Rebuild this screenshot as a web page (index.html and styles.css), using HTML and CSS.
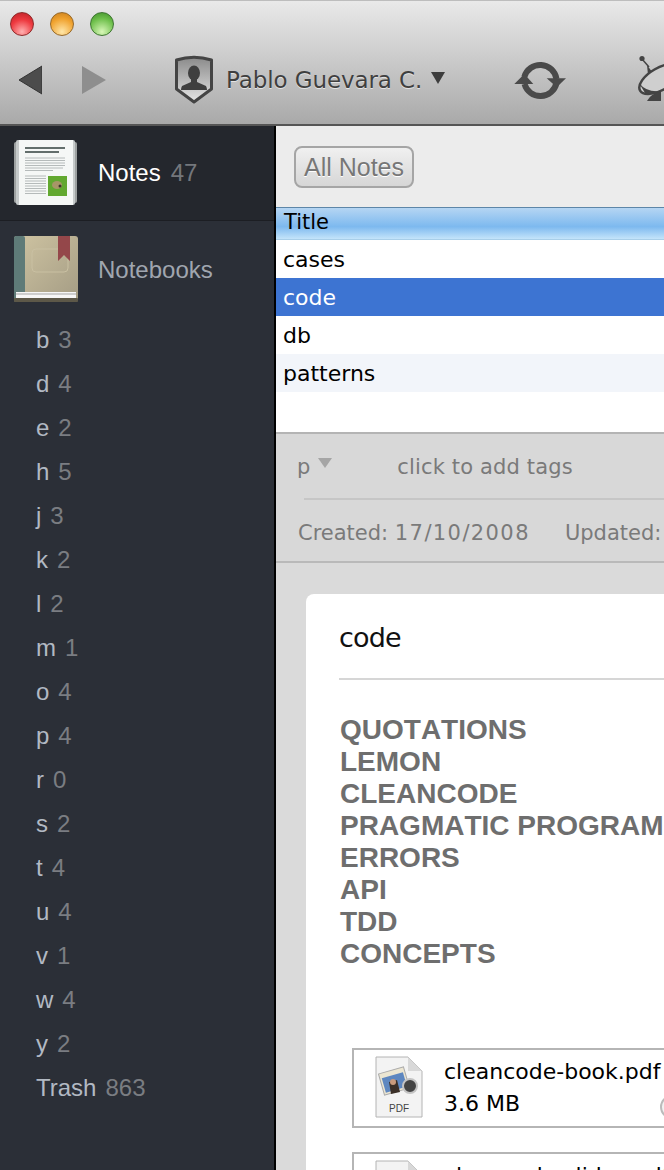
FILE: index.html
```html
<!DOCTYPE html>
<html>
    <head>
        <meta charset="utf-8">
        <title>Notes</title>
        <link rel="stylesheet" href="styles.css">
    </head>
    <body>
        <div class="toolbar">
            <div class="lights">
                <span class="light red"></span>
                <span class="light amber"></span>
                <span class="light green"></span>
            </div>
            <div class="tools">
                <svg class="nav" width="24" height="30" viewBox="0 0 24 30"><path d="M24 1V29L1 15Z" fill="#4c4c4c" stroke="#333" stroke-width="1"/></svg>
                <svg class="nav nav-next" width="24" height="30" viewBox="0 0 24 30"><path d="M0 1V29L24 15Z" fill="#8e8e8e"/></svg>
                <svg class="shield" width="40" height="50" viewBox="0 0 40 50">
                    <defs>
                        <linearGradient id="shieldfill" x1="0" y1="0" x2="0" y2="1">
                            <stop offset="0" stop-color="#8a8a8a"/>
                            <stop offset="1" stop-color="#e6e6e6"/>
                        </linearGradient>
                    </defs>
                    <path d="M2.5 5Q20 -0.5 37.5 5V34L20 47L2.5 34Z" fill="url(#shieldfill)" stroke="#444" stroke-width="3" stroke-linejoin="round"/>
                    <ellipse cx="20" cy="18" rx="6" ry="7.5" fill="#3f3f3f"/>
                    <path d="M17 24H23V27L32 31Q33 33 33 35H7Q7 33 8 31L17 27Z" fill="#3f3f3f"/>
                </svg>
                <span class="user">Pablo Guevara C.</span>
                <span class="caret"></span>
                <svg class="sync" width="54" height="42" viewBox="0 0 54 42">
                    <path d="M11.3 18A16.5 16.5 0 0 1 43.5 20" fill="none" stroke="#4a4a4a" stroke-width="6"/>
                    <path d="M43.5 24A16.5 16.5 0 0 1 11.5 25" fill="none" stroke="#4a4a4a" stroke-width="6"/>
                    <path d="M33.7 19.3H53L43.7 28.3Z" fill="#4a4a4a"/>
                    <path d="M1.3 25H20.3L11.3 15Z" fill="#4a4a4a"/>
                </svg>
                <svg class="dish" width="40" height="50" viewBox="0 0 40 50">
                    <circle cx="5" cy="3.5" r="2.6" fill="#444"/>
                    <path d="M5 4L12 12" stroke="#444" stroke-width="1.5"/>
                    <path d="M10 10L18 21L11 20Z" fill="#444"/>
                    <ellipse cx="23" cy="24" rx="23" ry="11" transform="rotate(-30 23 24)" fill="#cfcfcf" stroke="#444" stroke-width="2.5"/>
                    <path d="M2 28Q10 38 24 36L24 40L8 38Z" fill="#444"/>
                    <path d="M10 46Q14 38 24 37V46Z" fill="#444"/>
                </svg>
            </div>
        </div>
        <div class="main">
            <div class="sidebar">
                <div class="side-row side-notes">
                    <svg class="side-icon" width="66" height="70" viewBox="0 0 66 70">
                        <rect x="1" y="4" width="63" height="61" rx="2" fill="#9da1a1"/>
                        <rect x="3" y="2" width="59" height="65" rx="2" fill="#c6caca"/>
                        <rect x="6" y="2" width="54" height="65" fill="#f5f7f6"/>
                        <path d="M12 10H52M12 14H46" stroke="#33413f" stroke-width="1.6"/>
                        <path d="M12 20H52M12 22.5H52M12 25H52M12 27.5H52M12 30H50M12 32.5H40M12 38H33M12 40.5H33M12 43H33M12 45.5H33M12 48H33M12 50.5H33M12 53H33M12 55.5H33" stroke="#b5baba" stroke-width="1"/>
                        <rect x="35" y="38" width="19" height="20" fill="#62a830"/>
                        <ellipse cx="44" cy="47" rx="5" ry="4" fill="#a89668"/>
                        <circle cx="47" cy="48" r="1.5" fill="#3a3528"/>
                    </svg>
                    <span class="side-name side-name-on">Notes</span>
                    <span class="side-count">47</span>
                </div>
                <div class="side-row side-books">
                    <svg class="side-icon" width="66" height="68" viewBox="0 0 66 68">
                        <defs>
                            <linearGradient id="coverfill" x1="0" y1="0" x2="1" y2="1">
                                <stop offset="0" stop-color="#cfc4a2"/>
                                <stop offset="1" stop-color="#a49c84"/>
                            </linearGradient>
                        </defs>
                        <rect x="1" y="0" width="64" height="66" rx="3" fill="url(#coverfill)"/>
                        <rect x="1" y="0" width="11" height="66" rx="2" fill="#5f7b78"/>
                        <rect x="19" y="13" width="36" height="23" rx="4" fill="none" stroke="#c9c0a2"/>
                        <path d="M45 0H57V25L51 19L45 25Z" fill="#94474a"/>
                        <rect x="3" y="56" width="60" height="6" fill="#f6f6f6"/>
                        <path d="M3 58H63" stroke="#a5a5a5"/>
                        <rect x="1" y="62" width="64" height="4" rx="1" fill="#5d5848"/>
                    </svg>
                    <span class="side-name">Notebooks</span>
                </div>
                <ul class="tags">
                    <li><span class="tag">b</span><span class="tag-num">3</span></li>
                    <li><span class="tag">d</span><span class="tag-num">4</span></li>
                    <li><span class="tag">e</span><span class="tag-num">2</span></li>
                    <li><span class="tag">h</span><span class="tag-num">5</span></li>
                    <li><span class="tag">j</span><span class="tag-num">3</span></li>
                    <li><span class="tag">k</span><span class="tag-num">2</span></li>
                    <li><span class="tag">l</span><span class="tag-num">2</span></li>
                    <li><span class="tag">m</span><span class="tag-num">1</span></li>
                    <li><span class="tag">o</span><span class="tag-num">4</span></li>
                    <li><span class="tag">p</span><span class="tag-num">4</span></li>
                    <li><span class="tag">r</span><span class="tag-num">0</span></li>
                    <li><span class="tag">s</span><span class="tag-num">2</span></li>
                    <li><span class="tag">t</span><span class="tag-num">4</span></li>
                    <li><span class="tag">u</span><span class="tag-num">4</span></li>
                    <li><span class="tag">v</span><span class="tag-num">1</span></li>
                    <li><span class="tag">w</span><span class="tag-num">4</span></li>
                    <li><span class="tag">y</span><span class="tag-num">2</span></li>
                    <li><span class="tag">Trash</span><span class="tag-num">863</span></li>
                </ul>
            </div>
            <div class="content">
                <div class="filter">
                    <span class="filter-btn">All Notes</span>
                </div>
                <div class="list-head">Title</div>
                <div class="list">
                    <div class="list-row">cases</div>
                    <div class="list-row list-row-on">code</div>
                    <div class="list-row">db</div>
                    <div class="list-row list-row-alt">patterns</div>
                </div>
                <div class="meta">
                    <div class="meta-tags">
                        <span class="meta-book">p</span>
                        <span class="meta-caret"></span>
                        <span class="meta-add">click to add tags</span>
                    </div>
                    <div class="meta-dates">
                        <span>Created: <span class="date">17/10/2008</span></span>
                        <span>Updated:</span>
                    </div>
                </div>
                <div class="paper">
                    <div class="card">
                        <div class="note-title">code</div>
                        <div class="headings">
                            <div>QUOTATIONS</div>
                            <div>LEMON</div>
                            <div>CLEANCODE</div>
                            <div>PRAGMATIC PROGRAM</div>
                            <div>ERRORS</div>
                            <div>API</div>
                            <div>TDD</div>
                            <div>CONCEPTS</div>
                        </div>
                        <div class="attach">
                            <svg class="file-icon" width="48" height="62" viewBox="0 0 48 62">
                                <path d="M1 1H33L47 15V61H1Z" fill="#f3f3f3" stroke="#b4b4b4"/>
                                <path d="M33 1V15H47Z" fill="#d8d8d8"/>
                                <rect x="6" y="14" width="26" height="22" transform="rotate(-16 19 25)" fill="#ece6d2" stroke="#aaa"/>
                                <rect x="8" y="19" width="22" height="15" transform="rotate(-16 19 25)" fill="#5e87c0"/>
                                <path d="M14 26L22 24L25 36L16 38Z" fill="#3b3028"/>
                                <circle cx="18" cy="26" r="3" fill="#c99a7c"/>
                                <circle cx="35" cy="30" r="7" fill="#444" stroke="#c4c4c4" stroke-width="2"/>
                                <text class="file-label" x="24" y="56" text-anchor="middle">PDF</text>
                            </svg>
                            <div class="file-text">
                                <div class="file-name">cleancode-book.pdf</div>
                                <div class="file-size">3.6 MB</div>
                            </div>
                            <span class="file-btn"></span>
                        </div>
                        <div class="attach">
                            <svg class="file-icon" width="48" height="62" viewBox="0 0 48 62">
                                <path d="M1 1H33L47 15V61H1Z" fill="#f3f3f3" stroke="#b4b4b4"/>
                                <path d="M33 1V15H47Z" fill="#d8d8d8"/>
                            </svg>
                            <div class="file-text">
                                <div class="file-name">cleancode-slides.pdf</div>
                            </div>
                        </div>
                    </div>
                </div>
            </div>
        </div>
    </body>
</html>
```

FILE: styles.css
```css
* {
    margin: 0;
    padding: 0;
    box-sizing: border-box;
}
html, body {
    width: 664px;
    height: 1170px;
    overflow: hidden;
}
body {
    font-family: "DejaVu Sans", sans-serif;
    background: #d9d9d9;
}

.toolbar {
    height: 126px;
    padding-top: 2px;
    background: linear-gradient(#e9e9e9, #a9a9a9);
    border-top: 1px solid #bdbdbd;
    border-bottom: 2px solid #555;
}
.lights {
    display: flex;
    gap: 16px;
    padding: 9px 0 0 10px;
}
.light {
    width: 24px;
    height: 24px;
    border-radius: 50%;
    border: 1px solid #777;
}
.red {
    background: radial-gradient(circle at 50% 85%, #ffb0b0, #ee3a40 55%, #b81f25);
    border-color: #8e2a2a;
}
.amber {
    background: radial-gradient(circle at 50% 85%, #ffe6a8, #f0a22e 60%, #c67c1c);
    border-color: #96692a;
}
.green {
    background: radial-gradient(circle at 50% 85%, #d8f7b8, #6fc04c 60%, #3f8f2a);
    border-color: #3e7532;
}
.tools {
    display: flex;
    align-items: center;
    height: 52px;
    margin-top: 18px;
    color: #3f3f3f;
}
.nav {
    margin-left: 18px;
    flex: none;
}
.nav-next {
    margin-left: 40px;
}
.shield {
    margin-left: 68px;
    flex: none;
}
.user {
    margin-left: 12px;
    font-size: 23px;
    letter-spacing: -0.1px;
    white-space: nowrap;
    text-shadow: 0 1px 0 #e4e4e4;
}
.caret {
    margin: -4px 0 0 9px;
    border-left: 7px solid transparent;
    border-right: 7px solid transparent;
    border-top: 12px solid #3d3d3d;
    flex: none;
}
.sync {
    margin-left: 68px;
    flex: none;
}
.dish {
    margin-left: 70px;
    flex: none;
}

.main {
    display: flex;
    height: 1044px;
}
.sidebar {
    width: 276px;
    flex: none;
    background: #2b2f37;
    border-right: 2px solid #000;
    font-family: "Liberation Sans", sans-serif;
}
.side-row {
    display: flex;
    align-items: center;
}
.side-notes {
    height: 95px;
    padding-left: 13px;
    background: #24272d;
    border-bottom: 1px solid #1c1e23;
}
.side-books {
    height: 97px;
    padding-left: 13px;
}
.side-icon {
    flex: none;
}
.side-name {
    margin-left: 19px;
    font-size: 24px;
    color: #a0a6af;
}
.side-name-on {
    color: #fff;
}
.side-count {
    margin-left: 10px;
    font-size: 24px;
    color: #74777c;
}
.tags {
    list-style: none;
    padding-left: 36px;
}
.tags li {
    display: flex;
    align-items: center;
    height: 44px;
    font-size: 24px;
}
.tag {
    color: #b2b9c3;
    margin-right: 9px;
}
.tag-num {
    color: #7a7d82;
}

.content {
    flex: 1;
    min-width: 0;
    overflow: hidden;
}
.filter {
    height: 81px;
    padding: 20px 0 0 18px;
    background: #ececec;
}
.filter-btn {
    display: inline-block;
    width: 120px;
    height: 42px;
    line-height: 38px;
    text-align: center;
    font-family: "Liberation Sans", sans-serif;
    font-size: 25px;
    color: #777;
    text-shadow: 0 1px 0 #fff;
    background: linear-gradient(#f0f0f0, #d6d6d6);
    border: 2px solid #a5a5a5;
    border-radius: 8px;
}
.list-head {
    height: 33px;
    line-height: 29px;
    padding-left: 8px;
    font-size: 21px;
    color: #000;
    background: linear-gradient(#b5d5f3, #7db9ef 60%, #c4e4fa);
    border-top: 1px solid #5d86a8;
    border-bottom: 1px solid #a9cfe9;
}
.list {
    height: 192px;
    background: #fff;
}
.list-row {
    height: 38px;
    line-height: 40px;
    padding-left: 7px;
    font-size: 22px;
    color: #000;
}
.list-row-on {
    color: #fff;
    background: #3d74d2;
}
.list-row-alt {
    background: #f2f5fa;
}
.meta {
    height: 131px;
    background: #d8d8d8;
    border-top: 2px solid #b4b4b4;
    border-bottom: 2px solid #b9b9b9;
    color: #7a7a7a;
    font-size: 21px;
}
.meta-tags {
    display: flex;
    align-items: center;
    height: 66px;
    margin-left: 28px;
    border-bottom: 2px solid #c6c6c6;
}
.meta-book {
    margin-left: -7px;
    margin-top: 1px;
}
.meta-caret {
    margin: -6px 0 0 8px;
    border-left: 7px solid transparent;
    border-right: 7px solid transparent;
    border-top: 10px solid #a5a5a5;
}
.meta-add {
    margin: 1px 0 0 65px;
    letter-spacing: 0.15px;
    white-space: nowrap;
}
.meta-dates {
    display: flex;
    gap: 35px;
    padding: 21px 0 0 22px;
    white-space: nowrap;
}
.date {
    letter-spacing: 1.4px;
}
.paper {
    height: 610px;
    padding: 31px 0 0 30px;
    background: #dadada;
}
.card {
    width: 420px;
    height: 700px;
    padding: 0 0 0 34px;
    background: #fff;
    border-radius: 8px 0 0 0;
}
.note-title {
    height: 86px;
    padding-top: 28px;
    margin-left: -1px;
    font-size: 27px;
    color: #111;
    letter-spacing: -0.8px;
    border-bottom: 2px solid #d6d6d6;
}
.headings {
    padding-top: 34px;
    font-family: "Liberation Sans", sans-serif;
    font-weight: bold;
    font-size: 28px;
    font-kerning: none;
    line-height: 32px;
    color: #6e6e6e;
    white-space: nowrap;
}
.attach {
    display: flex;
    align-items: flex-start;
    position: relative;
    width: 340px;
    height: 80px;
    margin: 78px 0 0 12px;
    padding: 6px 0 0 21px;
    border: 2px solid #b5b5b5;
}
.attach + .attach {
    margin-top: 24px;
}
.file-icon {
    flex: none;
}
.file-label {
    font-family: "Liberation Sans", sans-serif;
    font-size: 10px;
    fill: #444;
}
.file-text {
    margin-left: 21px;
    font-size: 22px;
    line-height: 32px;
    color: #000;
    white-space: nowrap;
}
.file-btn {
    position: absolute;
    left: 306px;
    top: 45px;
    width: 24px;
    height: 24px;
    border-radius: 50%;
    border: 2px solid #bbb;
    background: #f2f2f2;
}
```
